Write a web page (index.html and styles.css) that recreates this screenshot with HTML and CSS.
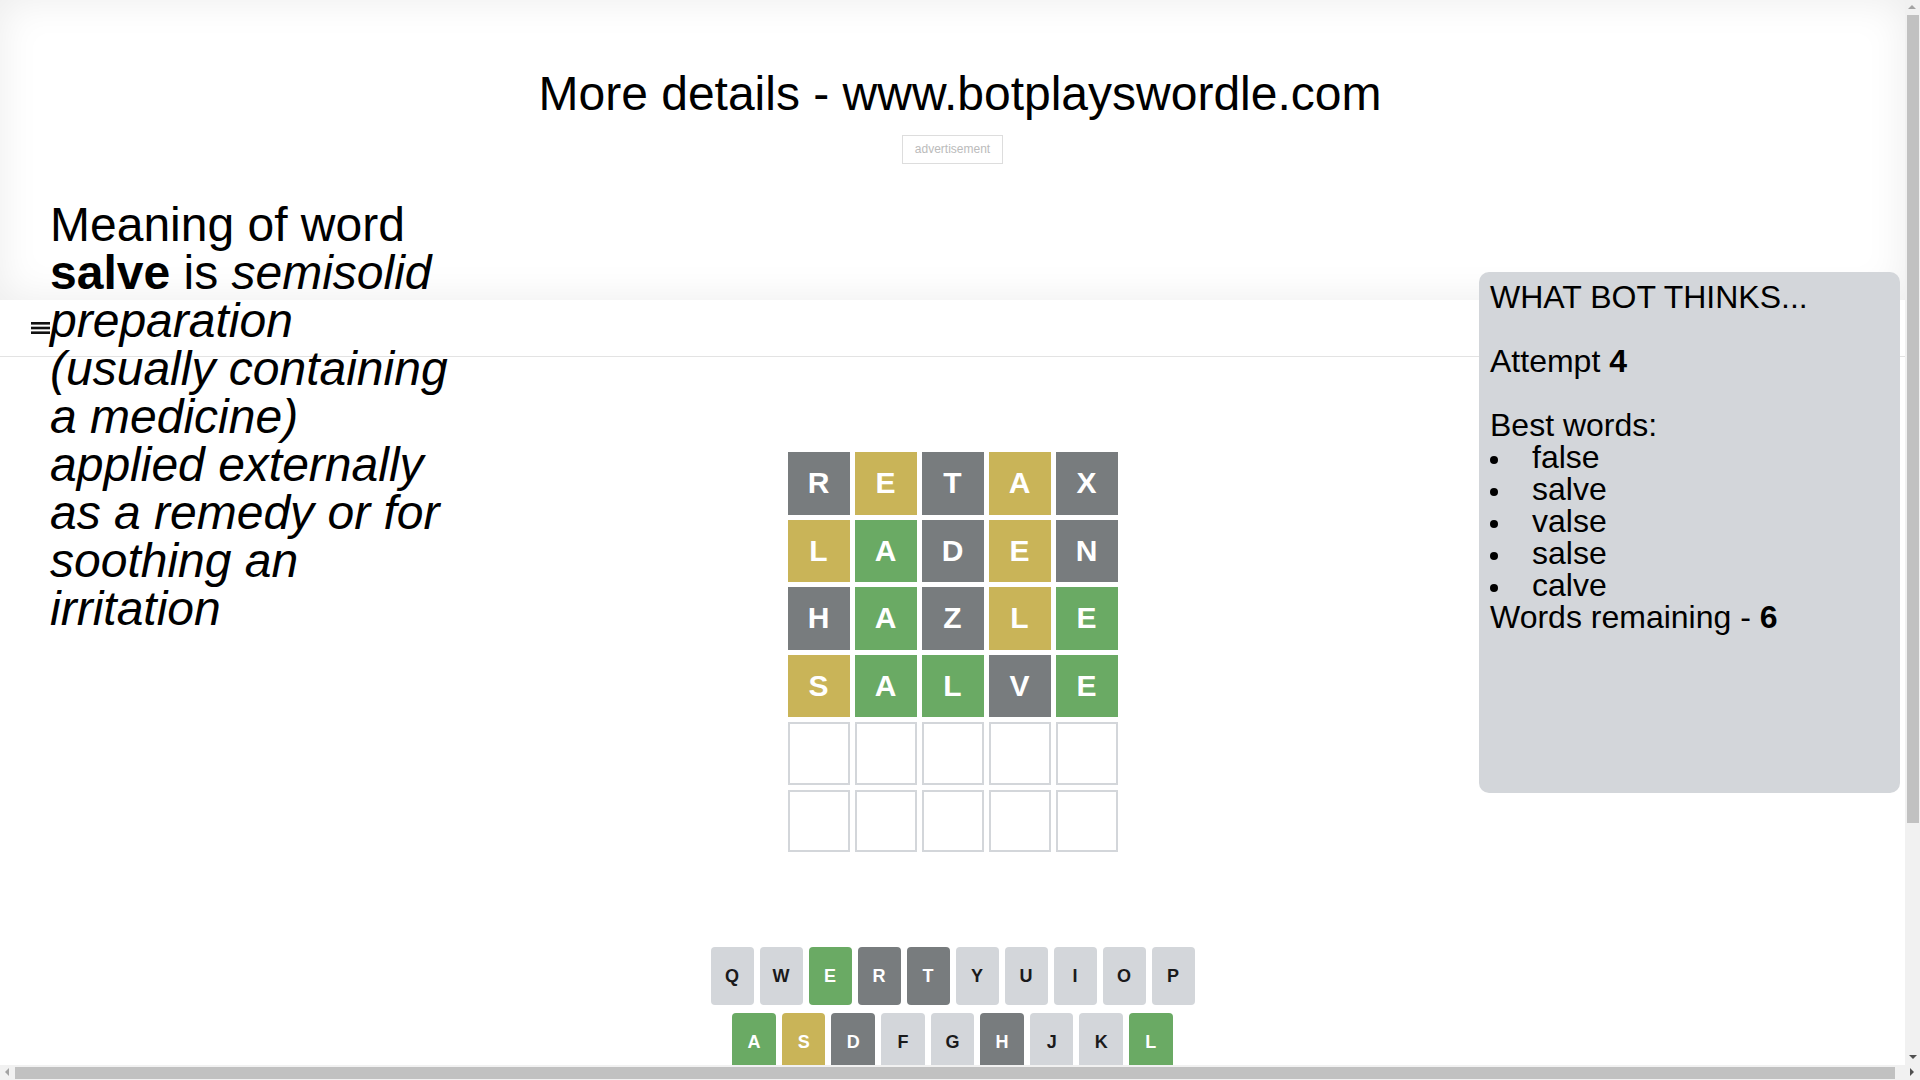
FILE: index.html
```html
<!DOCTYPE html>
<html lang="en">
<head>
  <meta charset="UTF-8">
  <meta name="viewport" content="width=device-width, initial-scale=1.0">
  <title>Bot plays Wordle</title>
  <link rel="stylesheet" href="styles.css">
</head>
<body>
  <div class="page">
    <header class="promo">
      <h1 class="promo-title">More details - www.botplayswordle.com</h1>
      <div class="ad-slot">advertisement</div>
    </header>

    <nav class="topbar">
      <span class="menu-icon">
        <svg width="19" height="12" viewBox="0 0 19 12">
          <rect x="0" y="0" width="19" height="2.6" fill="#111"/>
          <rect x="0" y="4.7" width="19" height="2.6" fill="#111"/>
          <rect x="0" y="9.4" width="19" height="2.6" fill="#111"/>
        </svg>
      </span>
    </nav>

    <main class="game">
      <div class="board-wrap">
        <div class="board">
          <div class="board-row">
            <div class="tile absent">R</div>
            <div class="tile present">E</div>
            <div class="tile absent">T</div>
            <div class="tile present">A</div>
            <div class="tile absent">X</div>
          </div>
          <div class="board-row">
            <div class="tile present">L</div>
            <div class="tile correct">A</div>
            <div class="tile absent">D</div>
            <div class="tile present">E</div>
            <div class="tile absent">N</div>
          </div>
          <div class="board-row">
            <div class="tile absent">H</div>
            <div class="tile correct">A</div>
            <div class="tile absent">Z</div>
            <div class="tile present">L</div>
            <div class="tile correct">E</div>
          </div>
          <div class="board-row">
            <div class="tile present">S</div>
            <div class="tile correct">A</div>
            <div class="tile correct">L</div>
            <div class="tile absent">V</div>
            <div class="tile correct">E</div>
          </div>
          <div class="board-row">
            <div class="tile"></div>
            <div class="tile"></div>
            <div class="tile"></div>
            <div class="tile"></div>
            <div class="tile"></div>
          </div>
          <div class="board-row">
            <div class="tile"></div>
            <div class="tile"></div>
            <div class="tile"></div>
            <div class="tile"></div>
            <div class="tile"></div>
          </div>
        </div>
      </div>

      <div class="keyboard">
        <div class="key-row">
          <button class="key">q</button>
          <button class="key">w</button>
          <button class="key correct">e</button>
          <button class="key absent">r</button>
          <button class="key absent">t</button>
          <button class="key">y</button>
          <button class="key">u</button>
          <button class="key">i</button>
          <button class="key">o</button>
          <button class="key">p</button>
        </div>
        <div class="key-row">
          <div class="half"></div>
          <button class="key correct">a</button>
          <button class="key present">s</button>
          <button class="key absent">d</button>
          <button class="key">f</button>
          <button class="key">g</button>
          <button class="key absent">h</button>
          <button class="key">j</button>
          <button class="key">k</button>
          <button class="key correct">l</button>
          <div class="half"></div>
        </div>
        <div class="key-row">
          <button class="key wide">enter</button>
          <button class="key absent">z</button>
          <button class="key absent">x</button>
          <button class="key">c</button>
          <button class="key absent">v</button>
          <button class="key">b</button>
          <button class="key absent">n</button>
          <button class="key">m</button>
          <button class="key wide">
            <svg width="24" height="24" viewBox="0 0 24 24">
              <path fill="#1a1a1b" d="M22 3H7c-.69 0-1.23.35-1.59.88L0 12l5.41 8.11c.36.53.9.89 1.59.89h15c1.1 0 2-.9 2-2V5c0-1.1-.9-2-2-2zm0 16H7.07L2.4 12l4.66-7H22v14zm-11.59-2L14 13.41 17.59 17 19 15.59 15.41 12 19 8.41 17.59 7 14 10.59 10.41 7 9 8.41 12.59 12 9 15.59z"/>
            </svg>
          </button>
        </div>
      </div>
    </main>

    <div class="page-foot"></div>

    <aside class="meaning">
      Meaning of word <b>salve</b> is <i>semisolid preparation (usually containing a medicine) applied externally as a remedy or for soothing an irritation</i>
    </aside>

    <aside class="bot-panel">
      <div>WHAT BOT THINKS...</div>
      <div class="bot-gap">Attempt <b>4</b></div>
      <div class="bot-gap">Best words:</div>
      <ul class="bot-words">
        <li>false</li>
        <li>salve</li>
        <li>valse</li>
        <li>salse</li>
        <li>calve</li>
      </ul>
      <div>Words remaining - <b>6</b></div>
    </aside>
  </div>

  <!-- window scrollbars as seen in the capture -->
  <div class="scrollbar-v" aria-hidden="true">
    <span class="arrow arrow-up"></span>
    <span class="thumb"></span>
    <span class="arrow arrow-down"></span>
  </div>
  <div class="scrollbar-h" aria-hidden="true">
    <span class="arrow arrow-left"></span>
    <span class="thumb"></span>
    <span class="arrow arrow-right"></span>
  </div>
</body>
</html>
```

FILE: styles.css
```css
html,
body {
  height: 100%;
  overflow: hidden;
}

body {
  margin: 0;
  padding: 0;
  font-family: 'Liberation Sans', Arial, sans-serif;
  color: #000;
}

.page {
  position: relative;
  width: calc(100vw - 15px);
}

/* header with the promo line and ad slot */
.promo {
  height: 300px;
  box-sizing: border-box;
  padding-top: 66px;
  text-align: center;
  box-shadow: inset 0 0 40px rgba(0, 0, 0, 0.08);
}

.promo-title {
  width: 100vw;
  margin: 0;
  font-size: 48px;
  font-weight: normal;
  line-height: 55px;
}

.ad-slot {
  width: fit-content;
  margin: 14px auto 0;
  padding: 7px 12px;
  border: 1px solid #ddd;
  font-size: 12px;
  line-height: 13px;
  color: #bbb;
}

.topbar {
  height: 56px;
  border-bottom: 1px solid #e3e3e3;
  display: flex;
  align-items: center;
  padding-left: 31px;
}

.menu-icon {
  display: flex;
}

/* game */
.game {
  width: 500px;
  height: 790px;
  margin: 0 auto;
  display: flex;
  flex-direction: column;
}

.board-wrap {
  flex-grow: 1;
  display: flex;
  justify-content: center;
  align-items: center;
  overflow: hidden;
}

.board {
  width: 350px;
  height: 420px;
  padding: 10px;
  box-sizing: border-box;
  display: grid;
  grid-template-rows: repeat(6, 1fr);
  grid-gap: 5px;
}

.board-row {
  display: grid;
  grid-template-columns: repeat(5, 1fr);
  grid-gap: 5px;
}

.tile {
  display: flex;
  justify-content: center;
  align-items: center;
  box-sizing: border-box;
  border: 2px solid #d3d6da;
  background-color: #fff;
  font-size: 30px;
  font-weight: bold;
  color: #fff;
  text-transform: uppercase;
}

.tile.absent {
  background-color: #787c7e;
  border-color: #787c7e;
}

.tile.present {
  background-color: #c9b458;
  border-color: #c9b458;
}

.tile.correct {
  background-color: #6aaa64;
  border-color: #6aaa64;
}

.keyboard {
  height: 200px;
  margin: 0 8px;
}

.key-row {
  display: flex;
  width: 100%;
  margin: 0 auto 8px;
}

.key {
  flex: 1;
  height: 58px;
  margin: 0 6px 0 0;
  padding: 0;
  border: 0;
  border-radius: 4px;
  background-color: #d3d6da;
  font-family: inherit;
  font-size: 18px;
  font-weight: bold;
  color: #1a1a1b;
  text-transform: uppercase;
  display: flex;
  justify-content: center;
  align-items: center;
  cursor: pointer;
}

.key:last-of-type {
  margin: 0;
}

.key.wide {
  flex: 1.5;
  font-size: 12px;
}

.key.absent {
  background-color: #787c7e;
  color: #fff;
}

.key.present {
  background-color: #c9b458;
  color: #fff;
}

.key.correct {
  background-color: #6aaa64;
  color: #fff;
}

.half {
  flex: 0.5;
}

.page-foot {
  height: 218px;
}

/* word meaning, sits over the header */
.meaning {
  position: absolute;
  left: 50px;
  top: 201px;
  width: 406px;
  font-size: 48px;
  line-height: 48px;
}

/* bot thoughts panel */
.bot-panel {
  position: absolute;
  top: 272px;
  right: 5px;
  width: 421px;
  height: 521px;
  box-sizing: border-box;
  padding: 9px 11px;
  background-color: #d3d6da;
  border-radius: 10px;
  font-size: 32px;
  line-height: 32px;
}

.bot-gap {
  margin-top: 32px;
}

.bot-words {
  margin: 0;
  padding: 0;
  list-style: none;
}

.bot-words li::before {
  content: "";
  display: inline-block;
  width: 8px;
  height: 8px;
  margin-right: 34px;
  border-radius: 50%;
  background-color: #000;
  vertical-align: middle;
}

/* scrollbars */
.scrollbar-v,
.scrollbar-h {
  position: fixed;
  background-color: #f1f1f1;
  z-index: 10;
}

.scrollbar-v {
  top: 0;
  right: 0;
  width: 15px;
  height: calc(100vh - 15px);
}

.scrollbar-h {
  left: 0;
  bottom: 0;
  width: 100vw;
  height: 15px;
}

.thumb {
  position: absolute;
  background-color: #c1c1c1;
}

.scrollbar-v .thumb {
  top: 15px;
  left: 2px;
  right: 1px;
  height: 808px;
}

.scrollbar-h .thumb {
  left: 15px;
  top: 2px;
  bottom: 1px;
  width: 1880px;
}

.arrow {
  position: absolute;
  width: 0;
  height: 0;
  border: 4px solid transparent;
}

.arrow-up {
  top: 1px;
  left: 3px;
  border-bottom-color: #a3a3a3;
}

.arrow-down {
  bottom: 2px;
  left: 4px;
  border-top-color: #505050;
}

.arrow-left {
  top: 3px;
  left: 1px;
  border-right-color: #a3a3a3;
}

.arrow-right {
  top: 3px;
  right: 2px;
  border-left-color: #505050;
}
```
